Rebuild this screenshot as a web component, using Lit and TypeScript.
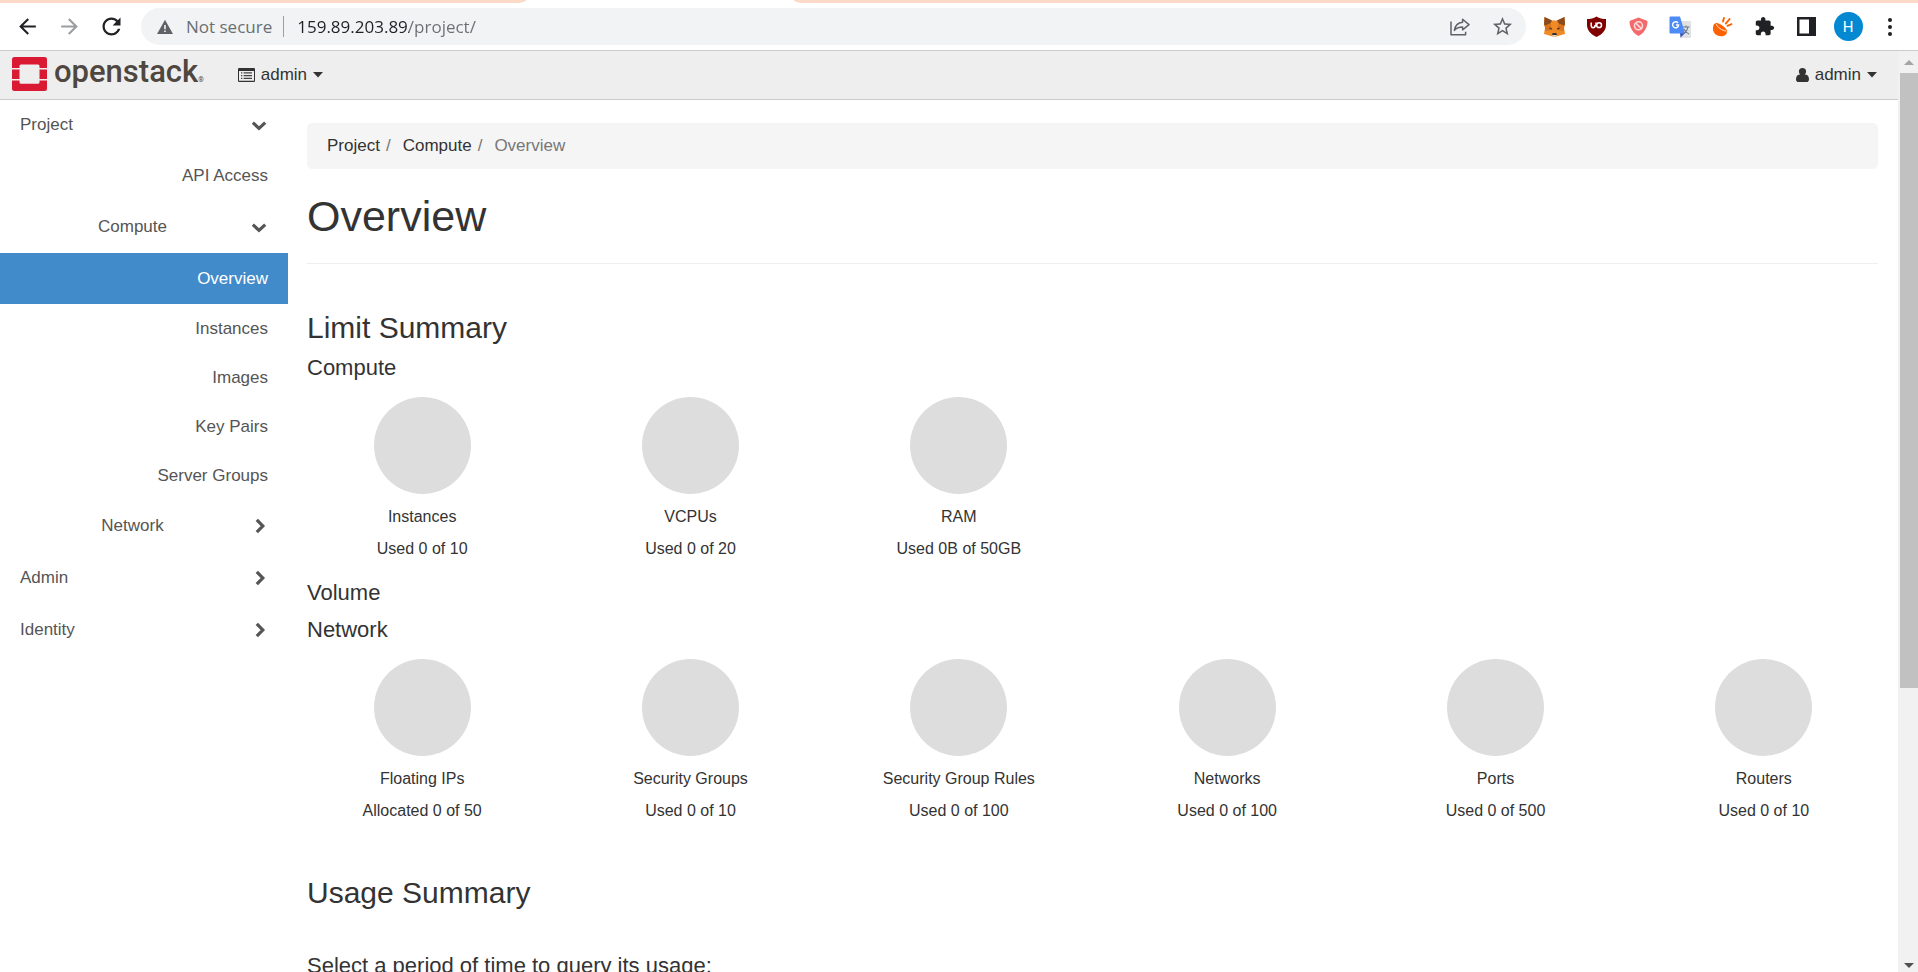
import { LitElement, html, svg, css, nothing, type TemplateResult } from "lit";
import { customElement, property } from "lit/decorators.js";
import { classMap } from "lit/directives/class-map.js";

const reset = css`
  *,
  *::before,
  *::after {
    box-sizing: border-box;
  }
  button,
  input {
    margin: 0;
    padding: 0;
    border: 0;
    background: none;
    color: inherit;
    font: inherit;
  }
  a {
    color: inherit;
    text-decoration: none;
  }
  ul,
  ol {
    margin: 0;
    padding: 0;
    list-style: none;
  }
  svg {
    display: block;
    flex: none;
  }
`;

const icon = (size: number, box: string, body: unknown) =>
  html`<svg width=${size} height=${size} viewBox=${box} aria-hidden="true">${body}</svg>`;

const glyphs = {
  back: icon(25, "0 0 24 24", svg`<path fill="#202124" d="M20 11H7.83l5.59-5.59L12 4l-8 8 8 8 1.41-1.41L7.83 13H20v-2z"/>`),
  forward: icon(25, "0 0 24 24", svg`<path fill="#9b9d9f" d="M12 4l-1.41 1.41L16.17 11H4v2h12.17l-5.58 5.59L12 20l8-8z"/>`),
  reload: icon(27, "0 0 24 24", svg`<path fill="#202124" d="M17.65 6.35C16.2 4.9 14.21 4 12 4c-4.42 0-7.99 3.58-7.99 8s3.57 8 7.99 8c3.73 0 6.84-2.55 7.73-6h-2.08c-.82 2.33-3.04 4-5.65 4-3.31 0-6-2.69-6-6s2.69-6 6-6c1.66 0 3.14.69 4.22 1.78L13 11h7V4l-2.35 2.35z"/>`),
  warning: icon(16, "0 0 16 16", svg`<path fill="#5f6368" d="M8 .8 16 15H0z"/><path fill="#f1f3f4" d="M7.2 6h1.6v4.2H7.2zM7.2 11.4h1.6V13H7.2z"/>`),
  share: icon(20, "0 0 20 20", svg`<g fill="none" stroke="#5f6368" stroke-width="1.5" stroke-linejoin="round"><path d="M1 4.5v13.3h14.6v-3"/><path d="M12.6 2.2 19 7.6l-6.4 5.2V10c-3.800 0-6.400 1-8.200 3.400C5 9 8 5.600 12.600 5.200z"/></g>`),
  star: icon(23, "0 0 24 24", svg`<path fill="#5f6368" d="M22 9.24l-7.19-.62L12 2 9.19 8.63 2 9.24l5.46 4.73L5.82 21 12 17.27 18.18 21l-1.63-7.03L22 9.24zM12 15.4l-3.76 2.27 1-4.28-3.32-2.88 4.38-.38L12 6.1l1.71 4.04 4.38.38-3.32 2.88 1 4.28L12 15.4z"/>`),
  fox: icon(21, "0 0 21 21", svg`<path fill="#f08a24" d="M.5 1 8 4.600h5L20.500 1 21 9l-1 3 1 6-5.500 1.500-3 1h-4l-3-1L0 18l1-6-1-3z"/><path fill="#8a4a1f" d="M.5 1 8 4.600 6.400 7.600 1.200 9.800 0 8.600zM20.500 1 13 4.600l1.600 3 5.200 2.200L21 8.600z"/><path fill="#d9741c" d="M1.200 9.800 6.400 7.600 8.600 14 1 15zM19.800 9.800 14.600 7.600 12.400 14 20 15z"/><path fill="#2b3440" d="m4.600 11.400 3 .8.300 1.300-2-.4zM16.400 11.400l-3 .8-.3 1.300 2-.4zM8.600 17h3.800l.5 2H8.100z"/><path fill="#d8cfc6" d="M8.100 19h4.800l-1 1.500H9.100z"/>`),
  ublock: icon(21, "0 0 21 21", svg`<path fill="#800000" d="M10.500.5C7.600 2.400 4.500 3 1 3v6c0 6 4.500 9.500 9.500 12 5-2.500 9.500-6 9.500-12V3c-3.500 0-6.600-.6-9.500-2.500z"/><g fill="none" stroke="#fff" stroke-width="1.500"><path d="M5.200 6.600v3.200a1.900 1.900 0 0 0 3.800 0h1V6.600"/><circle cx="13.100" cy="9.200" r="2.400"/></g>`),
  shield: icon(21, "0 0 21 21", svg`<path fill="#f4696b" d="M10.500 1.500 19.500 5c0 7-3.500 12-9 15-5.500-3-9-8-9-15z"/><g fill="none" stroke="#fbdcdc" stroke-width="1.600"><circle cx="10.500" cy="9.800" r="4"/><path d="m7.700 7 5.600 5.600"/></g>`),
  translate: icon(22, "0 0 22 22", svg`<path fill="#dfe1e3" d="M9 5h12a1 1 0 0 1 1 1v15a1 1 0 0 1-1 1H12z"/><path fill="#3f51b5" d="M11 17h5l-4.500 4.800z"/><path fill="#4c8bf5" d="M1.500.500H11L16 17.500H1.500a1 1 0 0 1-1-1v-15a1 1 0 0 1 1-1z"/><path fill="none" stroke="#fff" stroke-width="1.400" d="M9 7A3 3 0 1 0 9.600 9H7"/><path fill="none" stroke="#66788a" stroke-width="1.100" d="M14 11h6.500M17 9.500V11M19 11c-.5 3-2 5-4 6.500M15 13c1 2.200 2.700 4 5 5"/>`),
  horn: icon(21, "0 0 21 21", svg`<path fill="#ff6100" d="M2 8.200C4 6 14.500 13.500 14.800 16.600c.2 1.700-2 3.400-4.300 3.600C5 20.700 1.300 17.500 1 13.500c-.1-2 .2-4.200 1-5.300z"/><path fill="#ff6100" d="M3 7.400C6 5.600 15.800 12.400 15.200 16.200z"/><path fill="none" stroke="#fff" stroke-width=".9" d="M4.500 8.300c.3 2.600 6 6.600 9.500 6.700"/><path fill="none" stroke="#ff6100" stroke-width="1.900" stroke-linecap="round" d="M11 5.500 12 2M13.800 7.600 17.600 3M15.500 9.800 19.500 8.200"/>`),
  puzzle: icon(21, "0 0 24 24", svg`<path fill="#202124" d="M20.5 11H19V7c0-1.100-.9-2-2-2h-4V3.500C13 2.120 11.880 1 10.500 1S8 2.120 8 3.500V5H4c-1.100 0-1.990.9-1.990 2v3.800H3.500c1.490 0 2.700 1.210 2.700 2.700s-1.210 2.700-2.700 2.700H2V20c0 1.100.9 2 2 2h3.800v-1.500c0-1.490 1.210-2.700 2.700-2.700 1.490 0 2.700 1.210 2.700 2.700V22H17c1.100 0 2-.9 2-2v-4h1.500c1.380 0 2.500-1.120 2.500-2.500S21.880 11 20.500 11z"/>`),
  panel: icon(19, "0 0 19 19", svg`<path fill="#202124" fill-rule="evenodd" d="M0 0h19v19H0zM2.500 2.500v14H12v-14z"/>`),
  dots: icon(18, "0 0 18 18", svg`<g fill="#202124"><circle cx="9" cy="2" r="2"/><circle cx="9" cy="9" r="2"/><circle cx="9" cy="16" r="2"/></g>`),
  list: html`<svg width="17" height="14" viewBox="0 0 17 14" aria-hidden="true"><path fill="#333" fill-rule="evenodd" d="M1 0h15a1 1 0 0 1 1 1v12a1 1 0 0 1-1 1H1a1 1 0 0 1-1-1V1a1 1 0 0 1 1-1zm0 3v9.800h15V3z"/><path fill="#444" d="M3 4.300h1.300v1.300H3zm2.600 0H14v1.300H5.600zM3 7h1.300v1.300H3zm2.600 0H14v1.300H5.600zM3 9.700h1.300V11H3zm2.600 0H14V11H5.600z"/></svg>`,
  user: html`<svg width="13" height="14" viewBox="0 0 13 14" aria-hidden="true"><path fill="#333" d="M6.500 0a3.600 3.600 0 0 1 3.600 3.600c0 1.200-.5 2.300-1.300 2.900C11.600 6.600 13 8 13 11.400c0 1.500-1 2.600-2.400 2.600H2.400C1 14 0 12.900 0 11.400 0 8 1.400 6.600 4.200 6.500 3.400 5.900 2.900 4.800 2.900 3.600A3.600 3.600 0 0 1 6.500 0z"/></svg>`,
  caret: html`<svg width="10" height="6" viewBox="0 0 10 6" aria-hidden="true"><path fill="#333" d="M0 0h10L5 5.500z"/></svg>`,
  chevronDown: icon(16, "0 0 16 16", svg`<path fill="none" stroke="#555" stroke-width="3.200" d="m.8 5.600 6.200 5.800 6.200-5.800"/>`),
  chevronRight: icon(16, "0 0 16 16", svg`<path fill="none" stroke="#555" stroke-width="3.200" d="m4.800 1.800 6 6.200-6 6.200"/>`),
};

@customElement("browser-bar")
class BrowserBar extends LitElement {
  static styles = [
    reset,
    css`
      :host {
        display: block;
        flex: none;
        border-bottom: 1px solid #cbcbcb;
        background: #fff;
        font-family: "Open Sans", sans-serif;
        font-size: 17px;
      }
      .tabs {
        display: flex;
        justify-content: space-between;
        height: 3px;
      }
      .tab-before,
      .tab-after {
        background: #fdd9c7;
      }
      .tab-before {
        width: 526px;
        border-bottom-right-radius: 9px 3px;
      }
      .tab-after {
        flex: 1;
        margin-left: 268px;
        border-bottom-left-radius: 9px 3px;
      }
      .bar {
        display: flex;
        align-items: center;
        height: 47px;
        padding: 0 7px 0 6px;
      }
      .tool {
        display: flex;
        flex: none;
        align-items: center;
        justify-content: center;
        width: 42px;
        height: 37px;
      }
      .address {
        display: flex;
        flex: 1;
        align-items: center;
        min-width: 0;
        height: 37px;
        margin: 0 7px 0 9px;
        padding: 0 3px 0 16px;
        border-radius: 19px;
        background: #f1f3f4;
      }
      .security {
        display: flex;
        align-items: center;
        gap: 13px;
        padding-right: 11px;
        color: #6b6f73;
        white-space: nowrap;
      }
      .url {
        flex: 1;
        min-width: 0;
        height: 21px;
        padding-left: 13px;
        border-left: 1px solid #9b9ea2;
        line-height: 21px;
      }
      .url-text {
        display: block;
        width: 100%;
        height: 21px;
        background: linear-gradient(90deg, #202124 112px, #6b6f73 112px);
        background-clip: text;
        -webkit-background-clip: text;
        -webkit-text-fill-color: transparent;
      }
      .avatar {
        display: grid;
        place-items: center;
        width: 29px;
        height: 29px;
        border-radius: 50%;
        background: #0388d1;
        color: #fff;
        font-family: Roboto, sans-serif;
        font-size: 15px;
      }
    `,
  ];

  private tool(label: string, body: TemplateResult) {
    return html`<button class="tool" type="button" aria-label=${label}>${body}</button>`;
  }

  render() {
    return html`
      <div class="tabs"><div class="tab-before"></div><div class="tab-after"></div></div>
      <div class="bar">
        ${this.tool("Back", glyphs.back)} ${this.tool("Forward", glyphs.forward)} ${this.tool("Reload", glyphs.reload)}
        <div class="address">
          <button class="security" type="button">${glyphs.warning}Not secure</button>
          <div class="url">
            <input class="url-text" type="text" aria-label="Address" value="159.89.203.89/project/" spellcheck="false" />
          </div>
          ${this.tool("Share", glyphs.share)} ${this.tool("Bookmark", glyphs.star)}
        </div>
        ${this.tool("MetaMask", glyphs.fox)} ${this.tool("uBlock Origin", glyphs.ublock)}
        ${this.tool("Blocker", glyphs.shield)} ${this.tool("Translate", glyphs.translate)}
        ${this.tool("Announcements", glyphs.horn)} ${this.tool("Extensions", glyphs.puzzle)}
        ${this.tool("Side panel", glyphs.panel)} ${this.tool("Profile", html`<span class="avatar">H</span>`)}
        ${this.tool("Menu", glyphs.dots)}
      </div>
    `;
  }
}

@customElement("top-nav")
class TopNav extends LitElement {
  static styles = [
    reset,
    css`
      :host {
        display: flex;
        flex: none;
        align-items: center;
        height: 49px;
        padding: 0 21px 0 12px;
        border-bottom: 1px solid #cbcbcb;
        background: #eee;
        color: #333;
        font-size: 17px;
        line-height: 24px;
      }
      .brand {
        display: flex;
        align-items: center;
        gap: 7px;
        margin-right: 34px;
        padding-bottom: 2px;
      }
      .wordmark {
        padding-top: 4px;
        color: #4f473f;
        font-family: Roboto, sans-serif;
        font-size: 31px;
        font-weight: 500;
        line-height: 36px;
      }
      .mark {
        font-size: 7px;
      }
      .menu {
        display: flex;
        align-items: center;
        gap: 6px;
      }
      .account {
        margin-left: auto;
      }
    `,
  ];

  render() {
    return html`
      <a class="brand" href="#">
        <svg width="35" height="34" viewBox="0 0 35 34" aria-hidden="true">
          <path fill="#da1a32" d="M2.500 0h30A2.500 2.500 0 0 1 35 2.500V11h-7.500V9A1.500 1.500 0 0 0 26 7.500H9A1.500 1.500 0 0 0 7.500 9v2H0V2.500A2.500 2.500 0 0 1 2.500 0zM0 12.500h7.500V22H0zM27.500 12.500H35V22h-7.500zM0 23.500h7.500v1.700A1.500 1.500 0 0 0 9 26.700h17a1.500 1.500 0 0 0 1.500-1.500v-1.700H35v8A2.500 2.500 0 0 1 32.500 34h-30A2.500 2.500 0 0 1 0 31.500z" />
        </svg>
        <span class="wordmark">openstack<span class="mark">®</span></span>
      </a>
      <button class="menu" type="button">${glyphs.list}admin${glyphs.caret}</button>
      <button class="menu account" type="button">${glyphs.user}admin${glyphs.caret}</button>
    `;
  }
}

type NavEntry = { label: string; kind: "group" | "subgroup" | "link" | "item"; open?: boolean; active?: boolean };

const entries: NavEntry[] = [
  { label: "Project", kind: "group", open: true },
  { label: "API Access", kind: "link" },
  { label: "Compute", kind: "subgroup", open: true },
  { label: "Overview", kind: "item", active: true },
  { label: "Instances", kind: "item" },
  { label: "Images", kind: "item" },
  { label: "Key Pairs", kind: "item" },
  { label: "Server Groups", kind: "item" },
  { label: "Network", kind: "subgroup" },
  { label: "Admin", kind: "group" },
  { label: "Identity", kind: "group" },
];

@customElement("side-nav")
class SideNav extends LitElement {
  static styles = [
    reset,
    css`
      :host {
        display: block;
        flex: none;
        width: 288px;
        color: #555;
        font-size: 17px;
        line-height: 24px;
      }
      .row {
        display: flex;
        align-items: center;
        width: 100%;
        height: 52px;
        padding: 0 20px;
      }
      .first {
        height: 50px;
      }
      .group {
        text-align: left;
      }
      .subgroup {
        text-align: center;
      }
      .item {
        height: 49px;
      }
      .item,
      .link {
        text-align: right;
      }
      .link,
      .active {
        height: 51px;
      }
      .active {
        background: #428bca;
        color: #fff;
      }
      .label {
        flex: 1;
        margin-right: 7px;
      }
      .item .label,
      .link .label {
        margin-right: 0;
      }
    `,
  ];

  render() {
    return html`<nav aria-label="Dashboards">
      <ul>
        ${entries.map((entry, index) => {
          const classes = classMap({ row: true, [entry.kind]: true, first: index === 0, active: !!entry.active });
          const label = html`<span class="label">${entry.label}</span>`;
          const leaf = entry.kind === "item" || entry.kind === "link";
          return html`<li>
            ${leaf
              ? html`<a class=${classes} href="#" aria-current=${entry.active ? "page" : nothing}>${label}</a>`
              : html`<button class=${classes} type="button" aria-expanded=${entry.open ? "true" : "false"}>
                  ${label}${entry.open ? glyphs.chevronDown : glyphs.chevronRight}
                </button>`}
          </li>`;
        })}
      </ul>
    </nav>`;
  }
}

type Quota = { name: string; usage: string };

@customElement("quota-row")
class QuotaRow extends LitElement {
  static styles = [
    reset,
    css`
      :host {
        display: block;
        margin: 17px -20px 20px -19px;
        font-size: 16px;
        line-height: 23px;
      }
      .row {
        display: grid;
        grid-template-columns: repeat(6, 1fr);
      }
      .quota {
        display: flex;
        flex-direction: column;
        align-items: center;
        text-align: center;
      }
      .pie {
        width: 97px;
        height: 97px;
        margin-bottom: 11px;
        border-radius: 50%;
        background: #ddd;
      }
      .name {
        margin-bottom: 9px;
      }
    `,
  ];

  @property({ attribute: false }) quotas: Quota[] = [];

  render() {
    return html`<ul class="row">
      ${this.quotas.map(
        (quota) => html`<li class="quota">
          <div class="pie"></div>
          <div class="name">${quota.name}</div>
          <div>${quota.usage}</div>
        </li>`
      )}
    </ul>`;
  }
}

const compute: Quota[] = [
  { name: "Instances", usage: "Used 0 of 10" },
  { name: "VCPUs", usage: "Used 0 of 20" },
  { name: "RAM", usage: "Used 0B of 50GB" },
];

const network: Quota[] = [
  { name: "Floating IPs", usage: "Allocated 0 of 50" },
  { name: "Security Groups", usage: "Used 0 of 10" },
  { name: "Security Group Rules", usage: "Used 0 of 100" },
  { name: "Networks", usage: "Used 0 of 100" },
  { name: "Ports", usage: "Used 0 of 500" },
  { name: "Routers", usage: "Used 0 of 10" },
];

@customElement("app-root")
class AppRoot extends LitElement {
  static styles = [
    reset,
    css`
      :host {
        display: flex;
        flex-direction: column;
        height: 100vh;
        overflow: hidden;
        background: #fff;
        color: #333;
        font-family: "Liberation Sans", Arial, sans-serif;
      }
      .viewport {
        display: flex;
        flex: 1;
        min-height: 0;
      }
      .page {
        display: flex;
        flex: 1;
        flex-direction: column;
        min-width: 0;
        overflow: hidden;
      }
      .body {
        display: flex;
        flex: 1;
        min-height: 0;
      }
      .content {
        flex: 1;
        min-width: 0;
        padding: 23px 20px 0 19px;
      }
      .crumbs {
        display: flex;
        padding: 11px 20px;
        border-radius: 5px;
        background: #f5f5f5;
        font-size: 17px;
        line-height: 24px;
      }
      .divider {
        padding: 0 12px 0 6px;
        color: #777;
      }
      .current {
        color: #777;
      }
      h1,
      h2,
      h3 {
        margin: 0;
        font-weight: 400;
      }
      h1 {
        margin: 24px 0 47px;
        padding-bottom: 23px;
        border-bottom: 1px solid #eee;
        font-size: 43px;
        line-height: 47px;
      }
      h2 {
        margin-bottom: 11px;
        font-size: 30px;
        line-height: 33px;
      }
      h3 {
        font-size: 22px;
        line-height: 25px;
      }
      .empty {
        margin-bottom: 12px;
      }
      .usage {
        margin: 54px 0 44px;
      }
      .scrollbar {
        display: flex;
        flex: none;
        flex-direction: column;
        align-items: flex-end;
        width: 20px;
        padding: 9px 0 4px;
        background: #f1f1f1;
      }
      .arrow {
        width: 18px;
        height: 5px;
      }
      .track {
        flex: 1;
        width: 18px;
        margin: 8px 0 12px;
      }
      .thumb {
        height: 70%;
        background: #c1c1c1;
      }
    `,
  ];

  render() {
    return html`
      <browser-bar></browser-bar>
      <div class="viewport">
        <div class="page">
          <top-nav></top-nav>
          <div class="body">
            <side-nav></side-nav>
            <main class="content">
              <ol class="crumbs">
                <li><a href="#">Project</a><span class="divider">/</span></li>
                <li><a href="#">Compute</a><span class="divider">/</span></li>
                <li class="current">Overview</li>
              </ol>
              <h1>Overview</h1>
              <h2>Limit Summary</h2>
              <h3>Compute</h3>
              <quota-row .quotas=${compute}></quota-row>
              <h3 class="empty">Volume</h3>
              <h3>Network</h3>
              <quota-row .quotas=${network}></quota-row>
              <h2 class="usage">Usage Summary</h2>
              <h3>Select a period of time to query its usage:</h3>
            </main>
          </div>
        </div>
        <div class="scrollbar" aria-hidden="true">
          <svg class="arrow" viewBox="0 0 18 5"><path fill="#a3a3a3" d="M4 5h10L9 0z" /></svg>
          <div class="track"><div class="thumb"></div></div>
          <svg class="arrow" viewBox="0 0 18 5"><path fill="#505050" d="M4 0h10L9 5z" /></svg>
        </div>
      </div>
    `;
  }
}
